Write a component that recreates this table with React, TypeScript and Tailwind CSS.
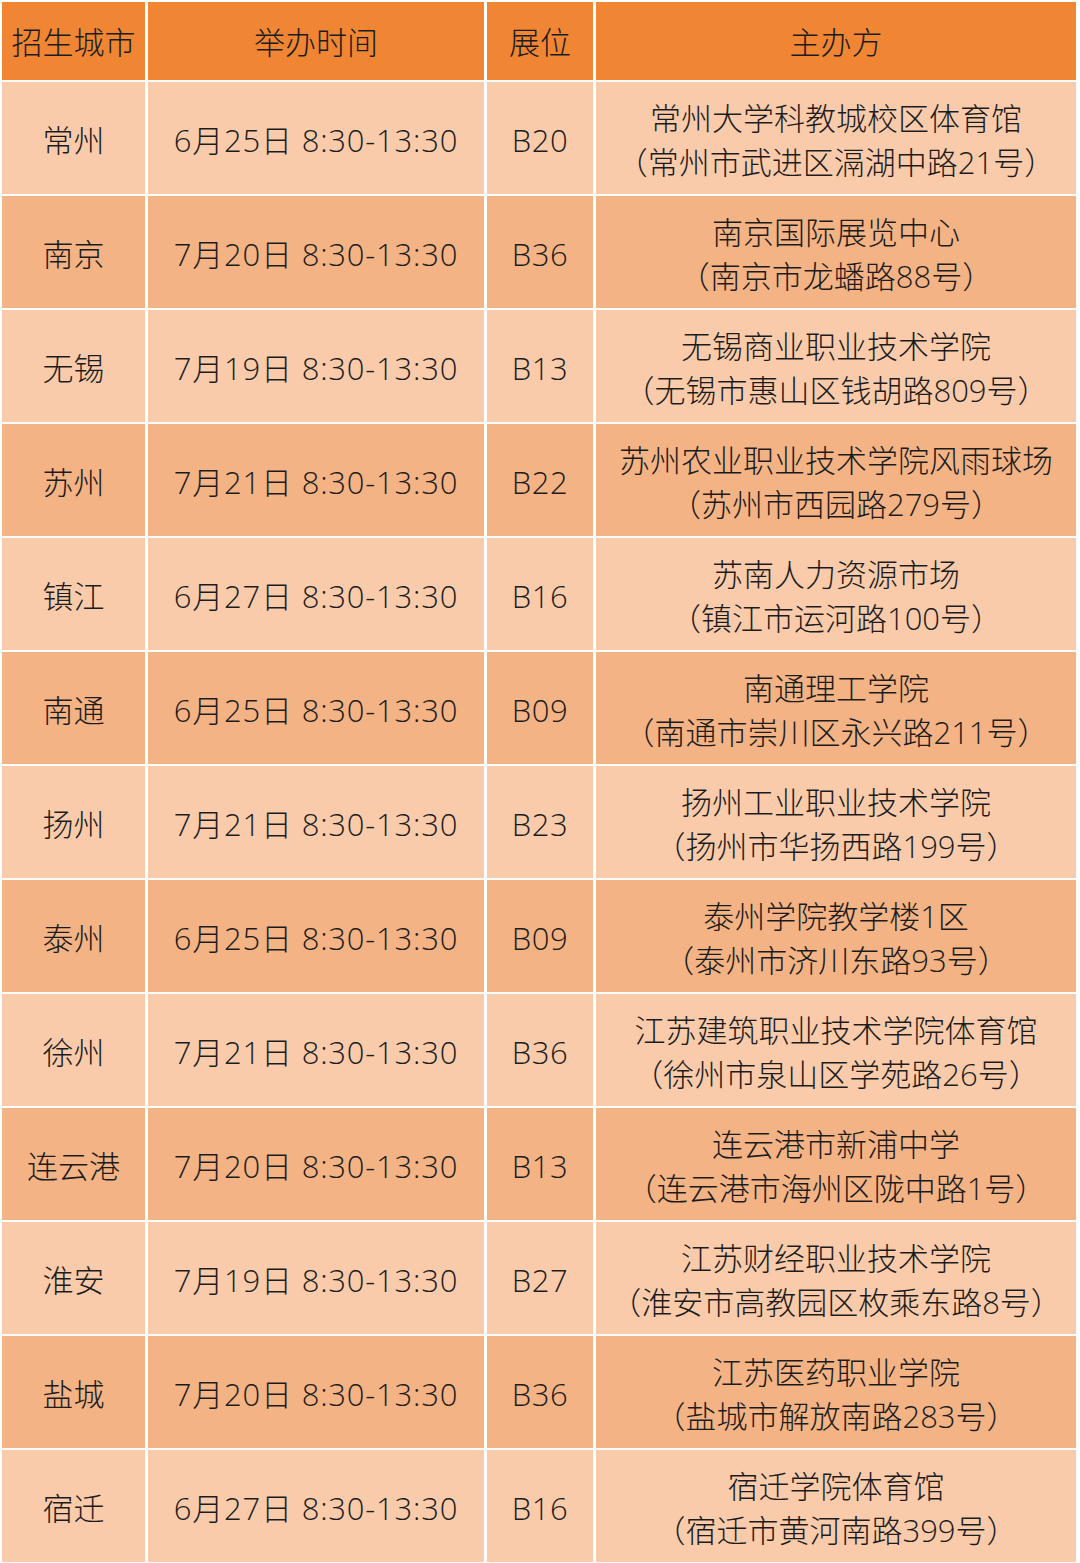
const rows = [
  ["常州", "6月25日 8:30-13:30", "B20", "常州大学科教城校区体育馆", "（常州市武进区滆湖中路21号）"],
  ["南京", "7月20日 8:30-13:30", "B36", "南京国际展览中心", "（南京市龙蟠路88号）"],
  ["无锡", "7月19日 8:30-13:30", "B13", "无锡商业职业技术学院", "（无锡市惠山区钱胡路809号）"],
  ["苏州", "7月21日 8:30-13:30", "B22", "苏州农业职业技术学院风雨球场", "（苏州市西园路279号）"],
  ["镇江", "6月27日 8:30-13:30", "B16", "苏南人力资源市场", "（镇江市运河路100号）"],
  ["南通", "6月25日 8:30-13:30", "B09", "南通理工学院", "（南通市崇川区永兴路211号）"],
  ["扬州", "7月21日 8:30-13:30", "B23", "扬州工业职业技术学院", "（扬州市华扬西路199号）"],
  ["泰州", "6月25日 8:30-13:30", "B09", "泰州学院教学楼1区", "（泰州市济川东路93号）"],
  ["徐州", "7月21日 8:30-13:30", "B36", "江苏建筑职业技术学院体育馆", "（徐州市泉山区学苑路26号）"],
  ["连云港", "7月20日 8:30-13:30", "B13", "连云港市新浦中学", "（连云港市海州区陇中路1号）"],
  ["淮安", "7月19日 8:30-13:30", "B27", "江苏财经职业技术学院", "（淮安市高教园区枚乘东路8号）"],
  ["盐城", "7月20日 8:30-13:30", "B36", "江苏医药职业学院", "（盐城市解放南路283号）"],
  ["宿迁", "6月27日 8:30-13:30", "B16", "宿迁学院体育馆", "（宿迁市黄河南路399号）"],
];

const headers = ["招生城市", "举办时间", "展位", "主办方"];

export default function App() {
  return (
    <div
      className="w-[1080px] h-[1563px] bg-white pl-[2px] pt-[2px] overflow-hidden text-[#1c1c1c] font-light text-[31px] leading-[44px]"
      style={{ fontFamily: '"Open Sans", "Noto Sans CJK SC", sans-serif' }}
    >
      <div className="grid grid-cols-[143px_336px_106px_480px] auto-rows-[112px] grid-rows-[78px] gap-x-[3px] gap-y-[2px]">
        {headers.map((h) => (
          <div key={h} className="bg-[#f08634] flex items-center justify-center pt-[2px]">
            {h}
          </div>
        ))}
        {rows.map((r, i) => {
          const bg = i % 2 === 0 ? "bg-[#f9cbab]" : "bg-[#f3b385]";
          return [
            <div key={`${i}a`} className={`${bg} flex items-center justify-center pt-[3px]`}>{r[0]}</div>,
            <div key={`${i}b`} className={`${bg} flex items-center justify-center pt-[3px] tracking-[0.8px]`}>{r[1]}</div>,
            <div key={`${i}c`} className={`${bg} flex items-center justify-center pt-[3px] tracking-[0.6px]`}>{r[2]}</div>,
            <div key={`${i}d`} className={`${bg} flex flex-col items-center justify-center pt-[3px] whitespace-nowrap`}>
              <span>{r[3]}</span>
              <span>{r[4]}</span>
            </div>,
          ];
        })}
      </div>
    </div>
  );
}
